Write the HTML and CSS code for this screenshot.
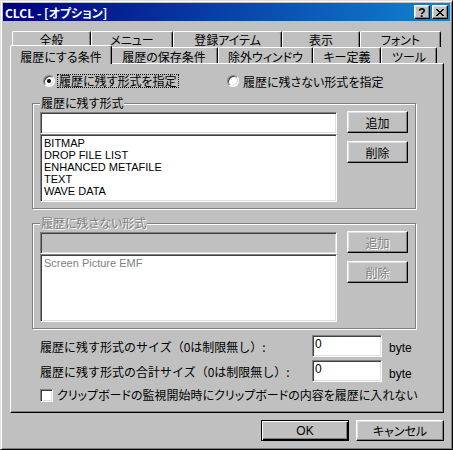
FILE: index.html
```html
<!DOCTYPE html>
<html lang="ja">
<head>
<meta charset="utf-8">
<title>CLCL - [オプション]</title>
<link rel="stylesheet" href="styles.css">
</head>
<body>
<div class="window">
  <div class="titlebar">
    <span class="title">CLCL - [オプション]</span>
    <div class="caption-btns">
      <span class="cbtn help">?</span>
      <span class="cbtn close"><svg width="8" height="7" viewBox="0 0 8 7"><path d="M0 0h2v1H0z M6 0h2v1H6z M1 1h2v1H1z M5 1h2v1H5z M2 2h4v1H2z M3 3h2v1H3z M2 4h4v1H2z M1 5h2v1H1z M5 5h2v1H5z M0 6h2v1H0z M6 6h2v1H6z" fill="#000"/></svg></span>
    </div>
  </div>
  <div class="content">
    <div class="tabs">
      <div class="tabrow back">
        <div class="tab w79">全般</div>
        <div class="tab w82">メニュー</div>
        <div class="tab w109">登録アイテム</div>
        <div class="tab w78">表示</div>
        <div class="tab w81">フォント</div>
      </div>
      <div class="tabrow front">
        <div class="tab w102 active">履歴にする条件</div>
        <div class="tab w108">履歴の保存条件</div>
        <div class="tab w95">除外ウィンドウ</div>
        <div class="tab w68">キー定義</div>
        <div class="tab w56">ツール</div>
      </div>
    </div>
    <div class="panel">
      <div class="radios">
        <div class="radio-item first"><span class="radio checked"></span><span class="radio-label focus">履歴に残す形式を指定</span></div>
        <div class="radio-item"><span class="radio"></span><span class="radio-label">履歴に残さない形式を指定</span></div>
      </div>
      <div class="group">
        <span class="legend">履歴に残す形式</span>
        <div class="group-body">
          <div class="list-col">
            <div class="edit"></div>
            <div class="listbox">
              <div class="item">BITMAP</div>
              <div class="item">DROP FILE LIST</div>
              <div class="item">ENHANCED METAFILE</div>
              <div class="item">TEXT</div>
              <div class="item">WAVE DATA</div>
            </div>
          </div>
          <div class="btn-col">
            <div class="btn">追加</div>
            <div class="btn">削除</div>
          </div>
        </div>
      </div>
      <div class="group disabled second">
        <span class="legend">履歴に残さない形式</span>
        <div class="group-body">
          <div class="list-col">
            <div class="edit"></div>
            <div class="listbox">
              <div class="item">Screen Picture EMF</div>
            </div>
          </div>
          <div class="btn-col">
            <div class="btn">追加</div>
            <div class="btn">削除</div>
          </div>
        </div>
      </div>
      <div class="size-row first">
        <span class="size-label">履歴に残す形式のサイズ（0は制限無し）:</span>
        <div class="num-edit">0</div>
        <span class="unit">byte</span>
      </div>
      <div class="size-row">
        <span class="size-label">履歴に残す形式の合計サイズ（0は制限無し）:</span>
        <div class="num-edit">0</div>
        <span class="unit low">byte</span>
      </div>
      <div class="check-row">
        <span class="checkbox"></span>
        <span class="check-label">クリップボードの監視開始時にクリップボードの内容を履歴に入れない</span>
      </div>
    </div>
    <div class="footer">
      <div class="btn foot default latin">OK</div>
      <div class="btn foot">キャンセル</div>
    </div>
  </div>
</div>
</body>
</html>
```

FILE: styles.css
```css
* { box-sizing: border-box; }
html, body { margin: 0; padding: 0; }
body {
  width: 453px;
  height: 450px;
  overflow: hidden;
  background: #c0c0c0;
  font-family: "Noto Sans CJK JP", "Noto Sans", sans-serif;
  font-size: 12px;
  line-height: 12px;
  color: #000;
  font-feature-settings: "palt";
}

.window {
  width: 453px;
  height: 450px;
  display: flex;
  flex-direction: column;
  background: #c0c0c0;
  border: 1px solid;
  border-color: #dfdfdf #000 #000 #dfdfdf;
  box-shadow: inset 1px 1px 0 #fff, inset -1px -1px 0 #808080;
  padding: 2px;
}

/* title bar */
.titlebar {
  height: 18px;
  flex: none;
  display: flex;
  align-items: center;
  padding: 0 2px;
  background: linear-gradient(to right, #000080, #1084d0);
}
.title {
  flex: 1;
  color: #fff;
  font-weight: bold;
  padding-top: 1px;
}
.caption-btns { display: flex; gap: 2px; }
.cbtn {
  width: 16px;
  height: 14px;
  display: flex;
  align-items: center;
  justify-content: center;
  background: #c0c0c0;
  border: 1px solid;
  border-color: #fff #000 #000 #fff;
  box-shadow: inset -1px -1px 0 #808080, inset 1px 1px 0 #dfdfdf;
}
.cbtn.help {
  font-family: "Liberation Sans", Arial, sans-serif;
  font-weight: bold;
  font-size: 12px;
  line-height: 12px;
  padding-top: 1px;
}
.cbtn svg { display: block; }

/* content */
.content {
  flex: 1;
  display: flex;
  flex-direction: column;
  padding: 10px 6px 0 7px;
}

/* tabs */
.tabs { display: flex; flex-direction: column; flex: none; }
.tabrow {
  display: flex;
  align-items: flex-start;
  height: 16px;
  padding: 0 2px;
  position: relative;
}
.tab {
  flex: none;
  height: 16px;
  padding-top: 3px;
  text-align: center;
  white-space: nowrap;
  background: #c0c0c0;
  border-top: 1px solid #fff;
  border-left: 1px solid #fff;
  border-right: 1px solid #000;
  border-radius: 2px 2px 0 0;
  box-shadow: inset -1px 0 0 #808080;
}
.back .tab { padding-top: 2px; }
.tab.active {
  position: relative;
  z-index: 2;
  height: 19px;
  margin: -2px -2px 0 -2px;
  padding-top: 5px;
}
.w56 { width: 56px; }
.w68 { width: 68px; }
.w78 { width: 78px; }
.w79 { width: 79px; }
.w81 { width: 81px; }
.w82 { width: 82px; }
.w95 { width: 95px; }
.w102 { width: 102px; }
.w108 { width: 108px; }
.w109 { width: 109px; }

/* panel */
.panel {
  flex: 1;
  display: flex;
  flex-direction: column;
  border: 1px solid;
  border-color: #fff #000 #000 #fff;
  box-shadow: inset -1px -1px 0 #808080;
  padding: 10px 0 0 21px;
}

/* radios */
.radios { display: flex; height: 14px; margin-left: 11px; }
.radio-item { display: flex; align-items: center; gap: 2px; }
.radio-item.first { width: 184px; }
.radio {
  position: relative;
  width: 12px;
  height: 12px;
  border-radius: 50%;
  background: #fff;
  border: 1px solid;
  border-color: #808080 #fff #fff #808080;
  box-shadow: inset 1px 1px 0 #404040, inset -1px -1px 0 #dfdfdf;
}
.radio.checked::after {
  content: "";
  position: absolute;
  left: 3px;
  top: 3px;
  width: 4px;
  height: 4px;
  border-radius: 50%;
  background: #000;
}
.radio-label {
  height: 14px;
  padding: 1px 1px 0;
  border: 1px solid transparent;
  white-space: nowrap;
}
.radio-label.focus { border: 1px dotted #000; padding-top: 0; }

/* group boxes */
.group {
  width: 384px;
  margin-top: 15px;
  display: flex;
  flex-direction: column;
  border: 1px solid #808080;
  box-shadow: inset 1px 1px 0 #fff, 1px 1px 0 #fff;
  padding: 0 7px 6px 7px;
}
.group.second { margin-top: 14px; }
.legend {
  align-self: flex-start;
  height: 12px;
  margin-top: -7px;
  padding: 0 1px;
  background: #c0c0c0;
  white-space: nowrap;
}
.group-body {
  display: flex;
  gap: 10px;
  margin-top: 3px;
}
.list-col { width: 297px; display: flex; flex-direction: column; }
.edit, .listbox, .num-edit {
  background: #fff;
  border: 1px solid;
  border-color: #808080 #fff #fff #808080;
  box-shadow: inset 1px 1px 0 #404040, inset -1px -1px 0 #dfdfdf;
}
.edit { height: 22px; }
.listbox { height: 68px; padding: 2px 3px; }
.item {
  height: 12px;
  white-space: nowrap;
  font-family: "Liberation Sans", Arial, sans-serif;
  font-size: 11px;
  line-height: 12px;
}
.btn-col {
  width: 61px;
  display: flex;
  flex-direction: column;
  gap: 8px;
  margin-top: -1px;
}
.btn {
  height: 22px;
  display: flex;
  align-items: center;
  justify-content: center;
  background: #c0c0c0;
  border: 1px solid;
  border-color: #fff #000 #000 #fff;
  box-shadow: inset -1px -1px 0 #808080, inset 1px 1px 0 #dfdfdf;
  padding-top: 1px;
}

/* disabled group */
.disabled .legend,
.disabled .btn {
  color: #808080;
  text-shadow: 1px 1px 0 #fff;
}
.disabled .edit { background: #c0c0c0; }
.disabled .item { color: #808080; }

/* size rows */
.size-row {
  display: flex;
  align-items: center;
  height: 22px;
  margin-top: 3px;
  padding-left: 8px;
}
.size-row.first { margin-top: 6px; }
.size-label {
  width: 272px;
  white-space: nowrap;
  padding-top: 2px;
  font-feature-settings: normal;
}
.num-edit {
  width: 70px;
  height: 22px;
  padding: 2px 0 0 2px;
  font-family: "Liberation Sans", Arial, sans-serif;
}
.unit {
  margin-left: 7px;
  padding-top: 3px;
  font-family: "Liberation Sans", Arial, sans-serif;
}
.unit.low { padding-top: 6px; }

/* checkbox */
.check-row {
  display: flex;
  align-items: center;
  gap: 4px;
  height: 14px;
  margin-top: 6px;
  padding-left: 8px;
}
.checkbox {
  width: 13px;
  height: 13px;
  background: #fff;
  border: 1px solid;
  border-color: #808080 #fff #fff #808080;
  box-shadow: inset 1px 1px 0 #404040, inset -1px -1px 0 #dfdfdf;
}
.check-label { white-space: nowrap; }

/* footer */
.footer {
  flex: none;
  display: flex;
  justify-content: flex-end;
  gap: 7px;
  margin: 7px 0 6px;
}
.btn.foot { width: 88px; height: 21px; }
.btn.latin { font-family: "Liberation Sans", Arial, sans-serif; }
.btn.default {
  border: 1px solid #000;
  box-shadow: inset 1px 1px 0 #fff, inset -1px -1px 0 #000, inset -2px -2px 0 #808080;
}
```
